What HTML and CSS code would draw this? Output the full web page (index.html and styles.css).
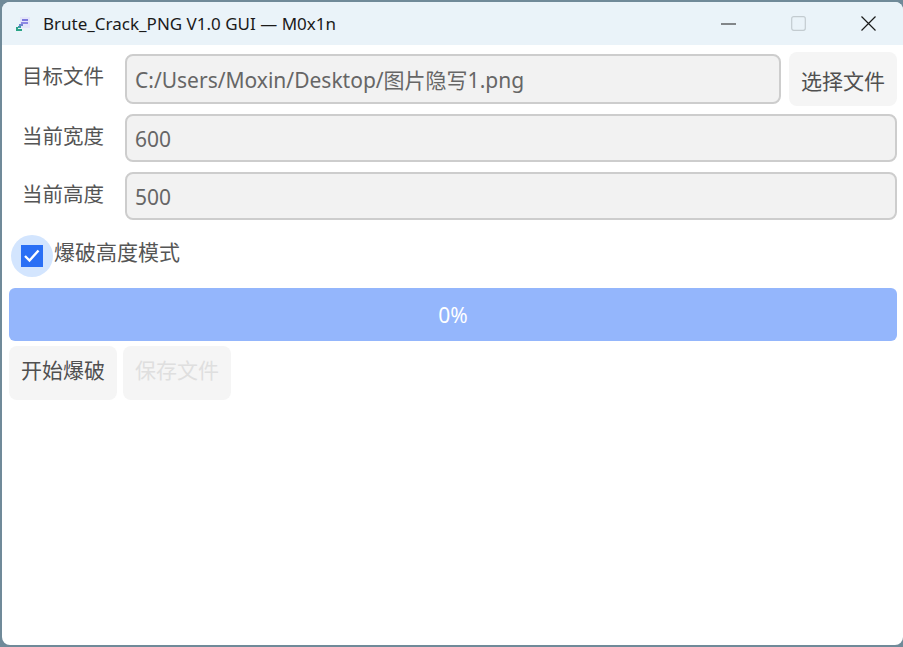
FILE: index.html
```html
<!doctype html>
<html lang="zh">
    <head>
        <meta charset="utf-8">
        <title>Brute_Crack_PNG V1.0 GUI — M0x1n</title>
        <link rel="stylesheet" href="styles.css">
    </head>
    <body>
        <div class="window">
            <header class="titlebar">
                <svg class="app-icon" width="16" height="16" viewBox="0 0 16 16">
                    <rect x="5" y="1" width="10" height="11" fill="#e4e5fa"/>
                    <rect x="7" y="3" width="6" height="2" fill="#7d78dc"/>
                    <rect x="6" y="6" width="7" height="2" fill="#8d88e4"/>
                    <rect x="4" y="8" width="4" height="2" fill="#6f82d0"/>
                    <path d="M1 15v-4h2v2h4v2z" fill="#2aa486"/>
                    <rect x="3" y="10" width="3" height="2" fill="#3a9aa4"/>
                </svg>
                <span class="title">Brute_Crack_PNG V1.0 GUI — M0x1n</span>
                <div class="controls">
                    <span class="ctl"><svg width="15" height="15" viewBox="0 0 15 15"><path d="M0 8h15" stroke="#1a1a1a" stroke-width="1.2"/></svg></span>
                    <span class="ctl"><svg width="15" height="15" viewBox="0 0 15 15"><rect x="0.7" y="0.7" width="13.6" height="13.6" rx="2" fill="none" stroke="#c3cbd0" stroke-width="1.2"/></svg></span>
                    <span class="ctl"><svg width="15" height="15" viewBox="0 0 15 15"><path d="M0.5 0.5l14 14M14.5 0.5l-14 14" stroke="#1a1a1a" stroke-width="1.2"/></svg></span>
                </div>
            </header>
            <main class="content">
                <div class="row row-file">
                    <label class="field-label">目标文件</label>
                    <input class="field" type="text" value="C:/Users/Moxin/Desktop/图片隐写1.png" readonly>
                    <button class="btn btn-pick">选择文件</button>
                </div>
                <div class="row">
                    <label class="field-label">当前宽度</label>
                    <input class="field" type="text" value="600" readonly>
                </div>
                <div class="row">
                    <label class="field-label">当前高度</label>
                    <input class="field" type="text" value="500" readonly>
                </div>
                <div class="check-row">
                    <span class="check-halo">
                        <span class="check-box">
                            <svg width="16" height="14" viewBox="0 0 16 14"><path d="M1 7l4.5 4.5 9-10" fill="none" stroke="#fff" stroke-width="2.4"/></svg>
                        </span>
                    </span>
                    <span class="check-label">爆破高度模式</span>
                </div>
                <div class="progress">0%</div>
                <div class="actions">
                    <button class="btn">开始爆破</button>
                    <button class="btn" disabled>保存文件</button>
                </div>
            </main>
        </div>
    </body>
</html>
```

FILE: styles.css
```css
* {
    box-sizing: border-box;
    padding: 0;
    border: 0;
    margin: 0;
    font-family: "Noto Sans", "Noto Sans CJK SC", sans-serif;
}

html, body {
    width: 903px;
    height: 647px;
    overflow: hidden;
}

body {
    background: #708a99;
    padding: 2px 0 2px 2px;
}

.window {
    width: 901px;
    height: 643px;
    background: #fff;
    border-radius: 8px;
    overflow: hidden;
    display: flex;
    flex-direction: column;
}

.titlebar {
    height: 43px;
    flex: none;
    background: #eaf3f9;
    display: flex;
    align-items: center;
    padding-left: 13px;
}

.app-icon {
    flex: none;
    margin-right: 12px;
}

.title {
    font-size: 17px;
    color: #1a1a1a;
    white-space: nowrap;
}

.controls {
    margin-left: auto;
    display: flex;
}

.ctl {
    width: 70px;
    height: 43px;
    display: flex;
    align-items: center;
    justify-content: center;
}

.content {
    flex: 1;
    padding: 7px 6px 0 7px;
}

.row {
    display: flex;
    align-items: center;
    height: 48px;
    margin-bottom: 10px;
}

.row-file {
    height: 54px;
    margin-bottom: 8px;
}

.field-label {
    width: 116px;
    flex: none;
    padding: 0 0 6px 13px;
    font-size: 20.5px;
    color: #555;
}

.row-file .field-label {
    padding-bottom: 8px;
}

.field {
    flex: 1;
    min-width: 0;
    height: 48px;
    padding: 2px 8px 0;
    background: #f2f2f2;
    border: 2px solid #cdcdcd;
    border-radius: 8px;
    font-size: 21px;
    color: #666;
    outline: none;
}

.row-file .field {
    height: 50px;
    padding: 0 8px 1px;
}

.btn {
    background: #f5f5f5;
    border-radius: 8px;
    height: 54px;
    width: 108px;
    font-size: 21px;
    color: #505050;
    padding-bottom: 8px;
}

.btn:disabled {
    color: #dfdfdf;
}

.btn-pick {
    flex: none;
    margin-left: 8px;
    padding: 2px 0 0;
}

.check-row {
    display: flex;
    align-items: center;
    height: 42px;
    margin: 15px 0 11px 2px;
}

.check-halo {
    width: 42px;
    height: 42px;
    flex: none;
    border-radius: 50%;
    background: #d3e5fe;
    display: flex;
    align-items: center;
    justify-content: center;
}

.check-box {
    width: 22px;
    height: 22px;
    background: #2a6ff5;
    display: flex;
    align-items: center;
    justify-content: center;
}

.check-label {
    font-size: 21px;
    color: #555;
    margin-left: 1px;
    padding-bottom: 10px;
}

.progress {
    height: 53px;
    background: #94b6fc;
    border-radius: 6px;
    color: #fff;
    font-size: 21px;
    display: flex;
    align-items: center;
    justify-content: center;
}

.actions {
    display: flex;
    gap: 6px;
    margin-top: 5px;
}
```
